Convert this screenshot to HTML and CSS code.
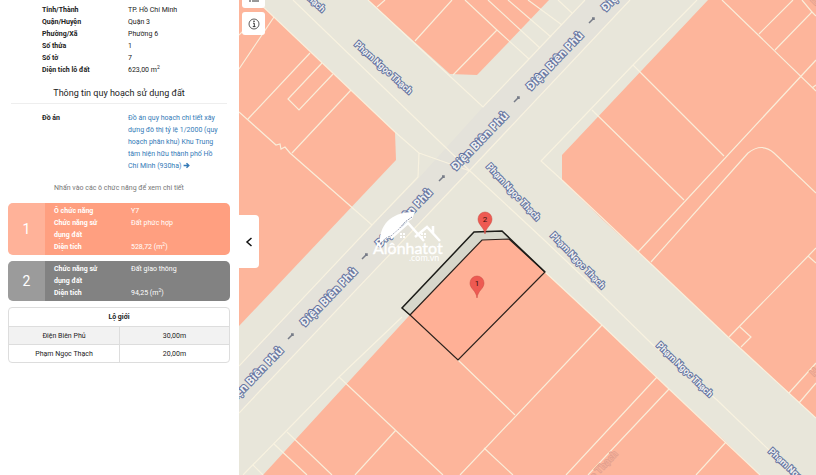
FILE: index.html
```html
<!DOCTYPE html>
<html lang="vi">
<head>
  <meta charset="UTF-8">
  <title>Thông tin quy hoạch</title>
  <link rel="stylesheet" href="styles.css">
</head>
<body>
  <div class="app">
    <aside class="sidebar">
      <dl class="info">
        <dt>Tỉnh/Thành</dt><dd>TP. Hồ Chí Minh</dd>
        <dt>Quận/Huyện</dt><dd>Quận 3</dd>
        <dt>Phường/Xã</dt><dd>Phường 6</dd>
        <dt>Số thửa</dt><dd>1</dd>
        <dt>Số tờ</dt><dd>7</dd>
        <dt>Diện tích lô đất</dt><dd>623,00 m<sup>2</sup></dd>
      </dl>
      <h2 class="title">Thông tin quy hoạch sử dụng đất</h2>
      <dl class="info">
        <dt>Đồ án</dt>
        <dd><a class="link" href="#">Đồ án quy hoạch chi tiết xây dựng đô thị tỷ lệ 1/2000 (quy hoạch phân khu) Khu Trung tâm hiện hữu thành phố Hồ Chí Minh (930ha) <svg class="arrow" viewBox="0 0 12 12"><path d="M1 6h9M6 2l4 4-4 4" fill="none" stroke="currentColor" stroke-width="2.4"/></svg></a></dd>
      </dl>
      <p class="hint">Nhấn vào các ô chức năng để xem chi tiết</p>

      <div class="zones">
        <button class="zone zone-mixed" type="button">
          <span class="zone-number">1</span>
          <span class="zone-body">
            <b>Ô chức năng</b><span>Y7</span>
            <b>Chức năng sử dụng đất</b><span>Đất phức hợp</span>
            <b>Diện tích</b><span>528,72 (m<sup>2</sup>)</span>
          </span>
        </button>
        <button class="zone zone-road" type="button">
          <span class="zone-number">2</span>
          <span class="zone-body">
            <b>Chức năng sử dụng đất</b><span>Đất giao thông</span>
            <b>Diện tích</b><span>94,25 (m<sup>2</sup>)</span>
          </span>
        </button>
      </div>

      <table class="limits">
        <thead>
          <tr><th colspan="2">Lộ giới</th></tr>
        </thead>
        <tbody>
          <tr><td>Điện Biên Phủ</td><td>30,00m</td></tr>
          <tr><td>Phạm Ngọc Thạch</td><td>20,00m</td></tr>
        </tbody>
      </table>
    </aside>

    <main class="map">
      <svg class="map-canvas" viewBox="239 0 577 475" preserveAspectRatio="xMinYMin slice">
        <!-- roadway -->
        <path class="roadway" d="M239 366 372 225 417 180 483 107 585 0H630L470 170 239 413Z"/>

        <!-- blocks -->
        <g class="block">
          <path d="M239 0H256L274 17 351 90 395 132 396 160 239 326Z"/>
          <path d="M368 0 450 74 477 75 549 0Z"/>
          <path d="M708 0 562 155V180L603 220 650 263 728 337 789 393 816 418V0Z"/>
          <path d="M263 475 408 317 480 240 545 272 602 325 657 377 669 389 726 442 760 475Z"/>
        </g>

        <!-- parcel and road lines -->
        <g class="lines">
          <path d="M256 0 395 132 419 153 418 177 372 225 239 366M419 153 470 171M293 0 470 171 542 238 602 295 653 345 717 400 795 475"/>
          <path d="M239 413 470 170 630 0M243 475 339 377 402 317M697 0 633 65 541 161 562 180"/>
          <path d="M368 0 440 67 483 107 529 59 585 0M562 180 650 263 728 337 816 418M545 272 602 325 669 389 760 475"/>
          <path d="M274 17 239 69M239 35 260 14M310 53 248 119M322 63 288 99 299 110 333 74M351 90 292 153M239 112 276 145 280 144 281 149 285 147 290 153 372 225"/>
          <path d="M385 0 377 7M452 0 415 41M465 0 497 30 529 59M497 30 453 75M488 0 540 48M508 0 551 37M528 0 562 25M558 0 572 13"/>
          <path d="M633 65 724 156M592 110 684 200M722 0 816 91M793 0 759 34M802 0 812 12 775 50M812 12 816 16M816 60 638 252M816 85 812 88"/>
          <path d="M651 262 748 153Q762 142 774 153L816 193M816 248 729 337M740 327 751 337 741 347M808 256 816 263M816 363 789 393M816 383 799 403"/>
          <path d="M602 325 460 475M458 360 515 415M484 448 513 475M657 377 566 475M669 389 588 475M726 442 696 475"/>
          <path d="M339 377 443 475M396 430 355 475M287 432 332 475M274 444 307 475M253 465 263 475"/>
        </g>

        <g class="ghost-label">
          <text transform="translate(590 484) rotate(-46)">ọc Thạch</text>
          <text transform="translate(814 377) rotate(-46)">H</text>
          <text transform="translate(815 6) rotate(-46)">H</text>
        </g>

        <g class="road-label major">
          <text transform="translate(231 406) rotate(-46)">Điện Biên Phủ</text>
          <text transform="translate(305 327) rotate(-46)">Điện Biên Phủ</text>
          <text transform="translate(380 248) rotate(-46)">Điện Biên Phủ</text>
          <text transform="translate(456 171) rotate(-46)">Điện Biên Phủ</text>
          <text transform="translate(531 91) rotate(-46)">Điện Biên Phủ</text>
          <text transform="translate(606 12) rotate(-46)">Điện Biên Phủ</text>
        </g>
        <g class="road-label">
          <text transform="translate(267 -37) rotate(42)">Phạm Ngọc Thạch</text>
          <text transform="translate(354 45) rotate(42)">Phạm Ngọc Thạch</text>
          <text transform="translate(486 167) rotate(47)">Phạm Ngọc Thạch</text>
          <text transform="translate(550 236) rotate(46)">Phạm Ngọc Thạch</text>
          <text transform="translate(656 346) rotate(44)">Phạm Ngọc Thạch</text>
          <text transform="translate(768 452) rotate(43)">Phạm Ngọc Thạch</text>
        </g>

        <!-- one-way arrows -->
        <g class="oneway">
          <path d="M589 23 594 18M592 18 594 18 594 20"/>
          <path d="M514 102 519 97M517 97 519 97 519 99"/>
          <path d="M439 181 444 176M442 176 444 176 444 178"/>
          <path d="M362 259 367 254M365 254 367 254 367 256"/>
          <path d="M288 339 293 334M291 334 293 334 293 336"/>
        </g>

        <!-- selected lot -->
        <path class="lot-road" d="M402 308 474 232 502 231 509 239 482 240 410 315Z"/>
        <path class="lot" d="M410 315 482 240 509 239 545 272 458 360Z"/>
        <path class="lot-edge" d="M410 315 402 308 474 232 502 231 545 272"/>

        <g class="pin">
          <path d="M485 234C484 227 478 225 478 219A7 7 0 0 1 492 219C492 225 486 227 485 234Z"/>
          <text x="485" y="222">2</text>
          <path d="M477 298C476 290 470 289 470 283A7 7 0 0 1 484 283C484 289 478 290 477 298Z"/>
          <text x="477" y="286">1</text>
        </g>

        <!-- watermark -->
        <g class="watermark">
          <path d="M380 243C379 226 391 211 415 212L412 219 404 224 396 233 388 238Z"/>
          <path class="vein" d="M381 243Q386 237 391 236L398 230 405 222 412 217"/>
          <path class="roof" d="M391 238 408 223 424 241M415 237 427 227 440 241M433 226V233"/>
          <path d="M400 233h2v2h-2zM403 233h2v2h-2zM400 236h2v2h-2zM403 236h2v2h-2zM421 233h2v2h-2zM424 233h2v2h-2zM421 236h2v2h-2zM424 236h2v2h-2z"/>
          <text class="brand" x="373" y="254">Alônhatot</text>
          <text class="domain" x="409" y="261">.com.vn</text>
        </g>
      </svg>

      <div class="tools">
        <button class="tool" type="button" aria-label="Lớp bản đồ">
          <svg viewBox="0 0 12 12"><path d="M1 2h1M4 2h7M1 6h1M4 6h7M1 10h2M4 10h7" fill="none" stroke="#333"/></svg>
        </button>
        <button class="tool" type="button" aria-label="Thông tin">
          <svg viewBox="0 0 12 12"><circle cx="6" cy="6" r="5" fill="none" stroke="#333" stroke-width=".8"/><path d="M5 5.200h1.300v3.300M4.800 8.600h2.700" fill="none" stroke="#222" stroke-width=".9"/><circle cx="6" cy="3.300" r=".8" fill="#222"/></svg>
        </button>
      </div>
      <button class="collapse" type="button" aria-label="Thu gọn">
        <svg viewBox="0 0 8 12"><path d="M6.500 2 2 6l4.500 4" fill="none" stroke="#111" stroke-width="1.500"/></svg>
      </button>
    </main>
  </div>
</body>
</html>
```
FILE: styles.css
```css
* {
  box-sizing: border-box;
}
body {
  margin: 0;
  background: #fff;
  color: #222;
  font-family: Roboto, sans-serif;
  font-size: 7px;
  line-height: 12px;
}
button {
  font: inherit;
  border: 0;
  padding: 0;
  cursor: pointer;
}
sup {
  font-size: 5px;
  line-height: 0;
}
.app {
  display: flex;
  min-height: 100vh;
}

/* left panel */
.sidebar {
  flex: 0 0 239px;
  padding: 4px 9px 8px 8px;
}
.info {
  display: grid;
  grid-template-columns: 86px 1fr;
  margin: 0;
  padding: 0 6px 0 34px;
}
.info dt {
  font-weight: bold;
}
.info dd {
  margin: 0;
}
.title {
  margin: 8px 3px;
  padding-bottom: 1px;
  border-bottom: 1px solid #eee;
  font-size: 9px;
  font-weight: normal;
  line-height: 18px;
  text-align: center;
}
.link {
  color: #337ab7;
  text-decoration: none;
}
.arrow {
  width: 7px;
  height: 7px;
  vertical-align: -1px;
}
.hint {
  margin: 10px 0 9px;
  color: #777;
  text-align: center;
}
.zones {
  display: flex;
  flex-direction: column;
  gap: 6px;
}
.zone {
  display: flex;
  overflow: hidden;
  border-radius: 5px;
  color: #fff;
  text-align: left;
}
.zone-mixed {
  background: #ff9f80;
}
.zone-road {
  background: #828282;
}
.zone-number {
  display: flex;
  flex: 0 0 37px;
  align-items: center;
  justify-content: center;
  background: rgba(255, 255, 255, 0.2);
  font-size: 14px;
}
.zone-body {
  display: grid;
  flex: 1;
  grid-template-columns: 54px 1fr;
  column-gap: 23px;
  padding: 2px 9px;
}
.limits {
  width: 100%;
  margin-top: 6px;
  border: 1px solid #ddd;
  border-radius: 4px;
  border-spacing: 0;
  text-align: center;
  table-layout: fixed;
}
.limits th,
.limits td {
  height: 18px;
  padding: 0;
}
.limits td {
  border-top: 1px solid #ddd;
}
.limits td + td {
  border-left: 1px solid #ddd;
}
.limits tbody tr:first-child {
  background: #f2f2f2;
}

/* map */
.map {
  position: relative;
  flex: 1;
  overflow: hidden;
  background: #e8e6da;
}
.map-canvas {
  position: absolute;
  width: 100%;
  height: 100%;
}
.roadway {
  fill: #e4e2da;
}
.block {
  fill: #fdb59b;
}
.lines {
  fill: none;
  stroke: #faf3e0;
  stroke-width: 1.2px;
  stroke-opacity: 0.9;
}
.road-label {
  fill: #f1f1f0;
  stroke: #6474a0;
  stroke-width: 2px;
  paint-order: stroke;
  font: bold 9px Roboto, sans-serif;
}
.major {
  font: bold 11px "Noto Sans", sans-serif;
}
.ghost-label {
  fill: #f3ae98;
  stroke: #dc9c8c;
  stroke-width: 1px;
  paint-order: stroke;
  font: bold 10px Roboto, sans-serif;
}
.oneway {
  fill: none;
  stroke: #777c88;
  stroke-width: 1.5px;
}
.lot-road {
  fill: #d7d7cb;
}
.lot {
  fill: #ffb096;
  stroke: #2b211c;
  stroke-width: 1.2px;
}
.lot-edge {
  fill: none;
  stroke: #1c1c18;
  stroke-width: 1.5px;
}
.pin {
  fill: #ee5a52;
  stroke: #c94840;
  stroke-width: 0.5px;
}
.pin text {
  fill: #3a0f0c;
  stroke: none;
  font: 8px Roboto, sans-serif;
  text-anchor: middle;
}
.watermark {
  fill: #fff;
}
.roof {
  fill: none;
  stroke: #fff;
  stroke-width: 2.5px;
}
.vein {
  fill: none;
  stroke: #8c94ab;
  stroke-dasharray: 2 1;
}
.brand {
  stroke: #fff;
  stroke-width: 0.4px;
  font: 16px Lato, sans-serif;
}
.domain {
  font: 9px Lato, sans-serif;
}
.tools {
  position: absolute;
  top: -15px;
  left: 3px;
  display: flex;
  flex-direction: column;
  gap: 4px;
}
.tool {
  display: grid;
  place-items: center;
  width: 23px;
  height: 23px;
  border-radius: 3px;
  background: #fff;
}
.tool svg {
  width: 12px;
  height: 12px;
}
.collapse {
  position: absolute;
  top: 215px;
  left: 0;
  display: grid;
  place-items: center;
  width: 20px;
  height: 53px;
  border-radius: 0 4px 4px 0;
  background: #fff;
}
.collapse svg {
  width: 8px;
  height: 12px;
}
```
